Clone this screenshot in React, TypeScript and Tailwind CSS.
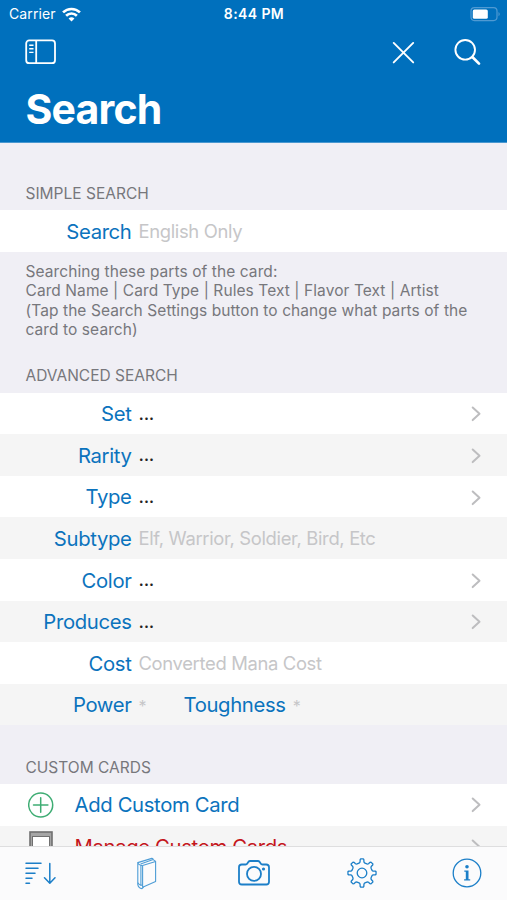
import type { ReactNode } from "react";
import clsx from "clsx";

const sans = "font-['Inter','Liberation_Sans',sans-serif]";

function Chevron() {
  return (
    <svg className="w-[10px] h-4 mr-[26px] shrink-0" viewBox="0 0 10 16" fill="none" stroke="#bdbdbf" strokeWidth="2" strokeLinecap="round" strokeLinejoin="round">
      <path d="M1.7 1.5L8.5 7.8L1.7 14.1" />
    </svg>
  );
}

function StatusBar() {
  return (
    <div className="h-7 grid grid-cols-3 items-center pl-[9px] pr-[6px] text-[14px] leading-none">
      <div className="flex items-center gap-[6px]">
        <span className="tracking-[0.1px]">Carrier</span>
        <svg className="w-[19px] h-[15px]" viewBox="0 0 18 14" fill="none" stroke="currentColor" strokeWidth="2.5">
          <path d="M1 5A11.5 11.5 0 0 1 17 5" />
          <path d="M3.9 8.2A7.2 7.2 0 0 1 14.1 8.2" />
          <path d="M9 13.7L6.2 10.9A4 4 0 0 1 11.8 10.9Z" fill="currentColor" stroke="none" />
        </svg>
      </div>
      <span className="text-center font-semibold text-[14px] tracking-[0.4px] pr-[2px]">8:44 PM</span>
      <div className="flex justify-end">
        <svg className="w-[31px] h-[15px]" viewBox="0 0 31 15" fill="none">
          <rect x="1" y="0.6" width="26" height="13" rx="3.5" stroke="#4f9ad3" strokeWidth="1.2" />
          <rect x="2.8" y="2.4" width="15" height="9.4" rx="1.6" fill="#fff" />
          <path d="M28.5 4.9Q31 7.1 28.5 9.3Z" fill="#4f9ad3" />
        </svg>
      </div>
    </div>
  );
}

function NavBar() {
  return (
    <header className="h-[143px] bg-[#0070bd] border-b border-[#4a98d0] text-white">
      <StatusBar />
      <div className="h-12 flex items-center pl-[25px] pr-[26px]">
        <button>
          <svg className="w-8 h-[26px]" viewBox="0 0 32 26" fill="none" stroke="currentColor" strokeWidth="1.8">
            <rect x="1.2" y="1.4" width="28.8" height="22.8" rx="3" />
            <path d="M11.2 1.4V24.2" />
            <path d="M4.2 6.2H8.5M4.2 9.8H8.5M4.2 13.4H8.5" strokeWidth="1.4" />
          </svg>
        </button>
        <button className="ml-auto mr-[39px]">
          <svg className="w-[23px] h-[23px]" viewBox="0 0 23 23" fill="none" stroke="currentColor" strokeWidth="1.9" strokeLinecap="round">
            <path d="M1.7 1.9L21.2 21.4M21.2 1.9L1.7 21.4" />
          </svg>
        </button>
        <button>
          <svg className="w-[27px] h-[27px]" viewBox="0 0 27 27" fill="none" stroke="currentColor" strokeLinecap="round">
            <circle cx="11.2" cy="10.8" r="9.8" strokeWidth="1.9" />
            <path d="M18.6 18.2L25 24.6" strokeWidth="2.7" />
          </svg>
        </button>
      </div>
      <h1 className="pl-[25.5px] pt-[8px] text-[41px] leading-[50px] font-bold tracking-[-0.8px]">Search</h1>
    </header>
  );
}

function SectionTitle({ children, className }: { children: ReactNode; className?: string }) {
  return (
    <h2 className={clsx("flex items-end pl-[25.5px] pb-[7.5px] text-[15.5px] leading-[19px] text-[#77777c]", className)}>
      {children}
    </h2>
  );
}

type RowProps = {
  label: string;
  placeholder?: string;
  shaded?: boolean;
  children?: ReactNode;
};

function Row({ label, placeholder, shaded, children }: RowProps) {
  return (
    <div className={clsx("h-[41.6px] pt-[2px] flex items-center text-[20.3px]", shaded ? "bg-[#f5f5f5]" : "bg-white")}>
      <span className="w-[131.5px] text-right text-[#0b73bd] tracking-[-0.35px]">{label}</span>
      {placeholder && <span className="pl-[7px] text-[18.4px] text-[#c6c6c8] tracking-[-0.33px]">{placeholder}</span>}
      {children}
      {!placeholder && !children && (
        <>
          <span className="flex-1 pl-[7px] pb-[1px] text-[19px] tracking-[-0.3px] text-[#222]">...</span>
          <Chevron />
        </>
      )}
    </div>
  );
}

// Outline of an eight tooth cog centred on 0,0
function cogPath() {
  const pts: string[] = [];
  for (let i = 0; i < 8; i++) {
    for (const [deg, r] of [[-17, 10.3], [-12, 10.7], [-9.5, 11.6], [-8, 13.4], [-5.5, 14.1], [5.5, 14.1], [8, 13.4], [9.5, 11.6], [12, 10.7], [17, 10.3]]) {
      const a = ((i * 45 + deg) * Math.PI) / 180;
      pts.push(`${(r * Math.sin(a)).toFixed(2)} ${(-r * Math.cos(a)).toFixed(2)}`);
    }
  }
  return `M${pts.join("L")}Z`;
}

function TabBar() {
  return (
    <nav className="h-[54px] shrink-0 flex items-center pl-[24px] pr-[25px] bg-[#fbfbfc] border-t border-[#dededf] text-[#1c7fc8]">
      <button>
        <svg className="w-8 h-8" viewBox="0 0 32 32" fill="none" stroke="currentColor" strokeWidth="1.5" strokeLinecap="round" strokeLinejoin="round">
          <path d="M2 5.3H17M2 10.3H14M2 15.3H11M2 20.3H8M2 25.3H5.5" />
          <path d="M25.8 5.5V25M20.5 19.8L25.8 25.2L31 19.8" />
        </svg>
      </button>
      <button className="ml-[80px]">
        <svg className="w-[22px] h-[34px]" viewBox="0 0 22 34" fill="none" stroke="#4e9dd6" strokeWidth="1.1" strokeLinejoin="round">
          <path d="M6.6 8.6L19.6 4.4V24.6L6.6 30.2Z" />
          <path d="M6.6 8.6Q2.6 8.2 1.8 5.6V27.6Q2.4 31 6 31.6L7.6 30" />
          <path d="M1.8 5.6L15.8 1.4Q17 1.2 17.2 2.6L19.6 4.4M4.6 7L17.2 2.6M4.9 8.3V28.8" />
          <path d="M1.8 25.6Q3 28.4 6.6 28.2" />
        </svg>
      </button>
      <button className="ml-[80px]">
        <svg className="w-8 h-[28px] -mt-px" viewBox="0 0 32 28" fill="none" stroke="currentColor" strokeWidth="1.8" strokeLinejoin="round">
          <path d="M3.8 5.5H7.6Q8.7 5.5 9.3 4.5L10.3 3Q11 2 12.2 2H19.8Q21 2 21.7 3L22.7 4.5Q23.3 5.5 24.4 5.5H28.2Q31 5.5 31 8.3V22.7Q31 25.5 28.2 25.5H3.8Q1 25.5 1 22.7V8.3Q1 5.5 3.8 5.5Z" />
          <circle cx="16" cy="14.9" r="7" />
          <circle cx="25.5" cy="10" r="1.6" fill="currentColor" stroke="none" />
        </svg>
      </button>
      <button className="ml-[77px]">
        <svg className="w-[30px] h-[30px] -mt-px" viewBox="-15 -15 30 30" fill="none" stroke="currentColor" strokeWidth="1.3" strokeLinejoin="round">
          <path d={cogPath()} />
          <circle r="4.8" />
        </svg>
      </button>
      <button className="ml-auto">
        <svg className="w-[30px] h-[30px] -mt-px" viewBox="0 0 30 30" fill="none" stroke="currentColor">
          <circle cx="15" cy="15" r="13.8" strokeWidth="1.3" />
          <circle cx="15" cy="8.7" r="1.8" fill="currentColor" stroke="none" />
          <path d="M12.3 12.6H16.5V21.3H18.2V22.4H12.1V21.3H13.8V13.7H12.3Z" fill="currentColor" stroke="none" />
        </svg>
      </button>
    </nav>
  );
}

export default function App() {
  return (
    <div className={clsx("w-[507px] h-[900px] flex flex-col overflow-hidden bg-[#f0eff5]", sans)}>
      <NavBar />
      <main className="flex-1 min-h-0 overflow-hidden">
        <SectionTitle className="h-[67px]">SIMPLE SEARCH</SectionTitle>
        <Row label="Search" placeholder="English Only" />
        <p className="pl-[25.5px] pt-[10px] text-[15.5px] leading-[19.5px] tracking-[0.08px] text-[#77777c] whitespace-nowrap">
          Searching these parts of the card:
          <br />
          Card Name | Card Type | Rules Text | Flavor Text | Artist
          <br />
          (Tap the Search Settings button to change what parts of the
          <br />
          card to search)
        </p>

        <SectionTitle className="h-[53px]">ADVANCED SEARCH</SectionTitle>
        <Row label="Set" />
        <Row label="Rarity" shaded />
        <Row label="Type" />
        <Row label="Subtype" placeholder="Elf, Warrior, Soldier, Bird, Etc" shaded />
        <Row label="Color" />
        <Row label="Produces" shaded />
        <Row label="Cost" placeholder="Converted Mana Cost" />
        <Row label="Power" shaded>
          <span className="w-[52px] pl-[7px] text-[16px] text-[#c6c6c8]">*</span>
          <span className="text-[#0b73bd] tracking-[-0.35px]">Toughness</span>
          <span className="pl-[7px] text-[16px] text-[#c6c6c8]">*</span>
        </Row>

        <SectionTitle className="h-[58.8px]">CUSTOM CARDS</SectionTitle>
        <div className="h-[41.6px] flex items-center bg-white text-[20.3px]">
          <svg className="w-[26px] h-[26px] ml-[28px] mr-[20.5px]" viewBox="0 0 26 26" fill="none" stroke="#3fad74" strokeWidth="1.5" strokeLinecap="round">
            <circle cx="12.7" cy="13" r="12" />
            <path d="M12.7 5.8V20.2M5.5 13H19.9" />
          </svg>
          <span className="flex-1 pt-[1px] text-[#0b73bd] tracking-[-0.35px]">Add Custom Card</span>
          <Chevron />
        </div>
        <div className="h-[41.6px] flex items-center bg-[#f5f5f5] text-[20.3px]">
          <svg className="w-[24px] h-[32px] ml-[29px] mr-[21.5px]" viewBox="0 0 24 32" fill="none">
            <rect x="1" y="1" width="22" height="30" fill="#a5a5a5" stroke="#707070" strokeWidth="1.6" />
            <rect x="3.5" y="5.5" width="17" height="21" fill="#fff" stroke="#707070" />
          </svg>
          <span className="flex-1 pt-[1px] text-[#c4161c] tracking-[-0.35px]">Manage Custom Cards</span>
          <Chevron />
        </div>
      </main>
      <TabBar />
    </div>
  );
}
